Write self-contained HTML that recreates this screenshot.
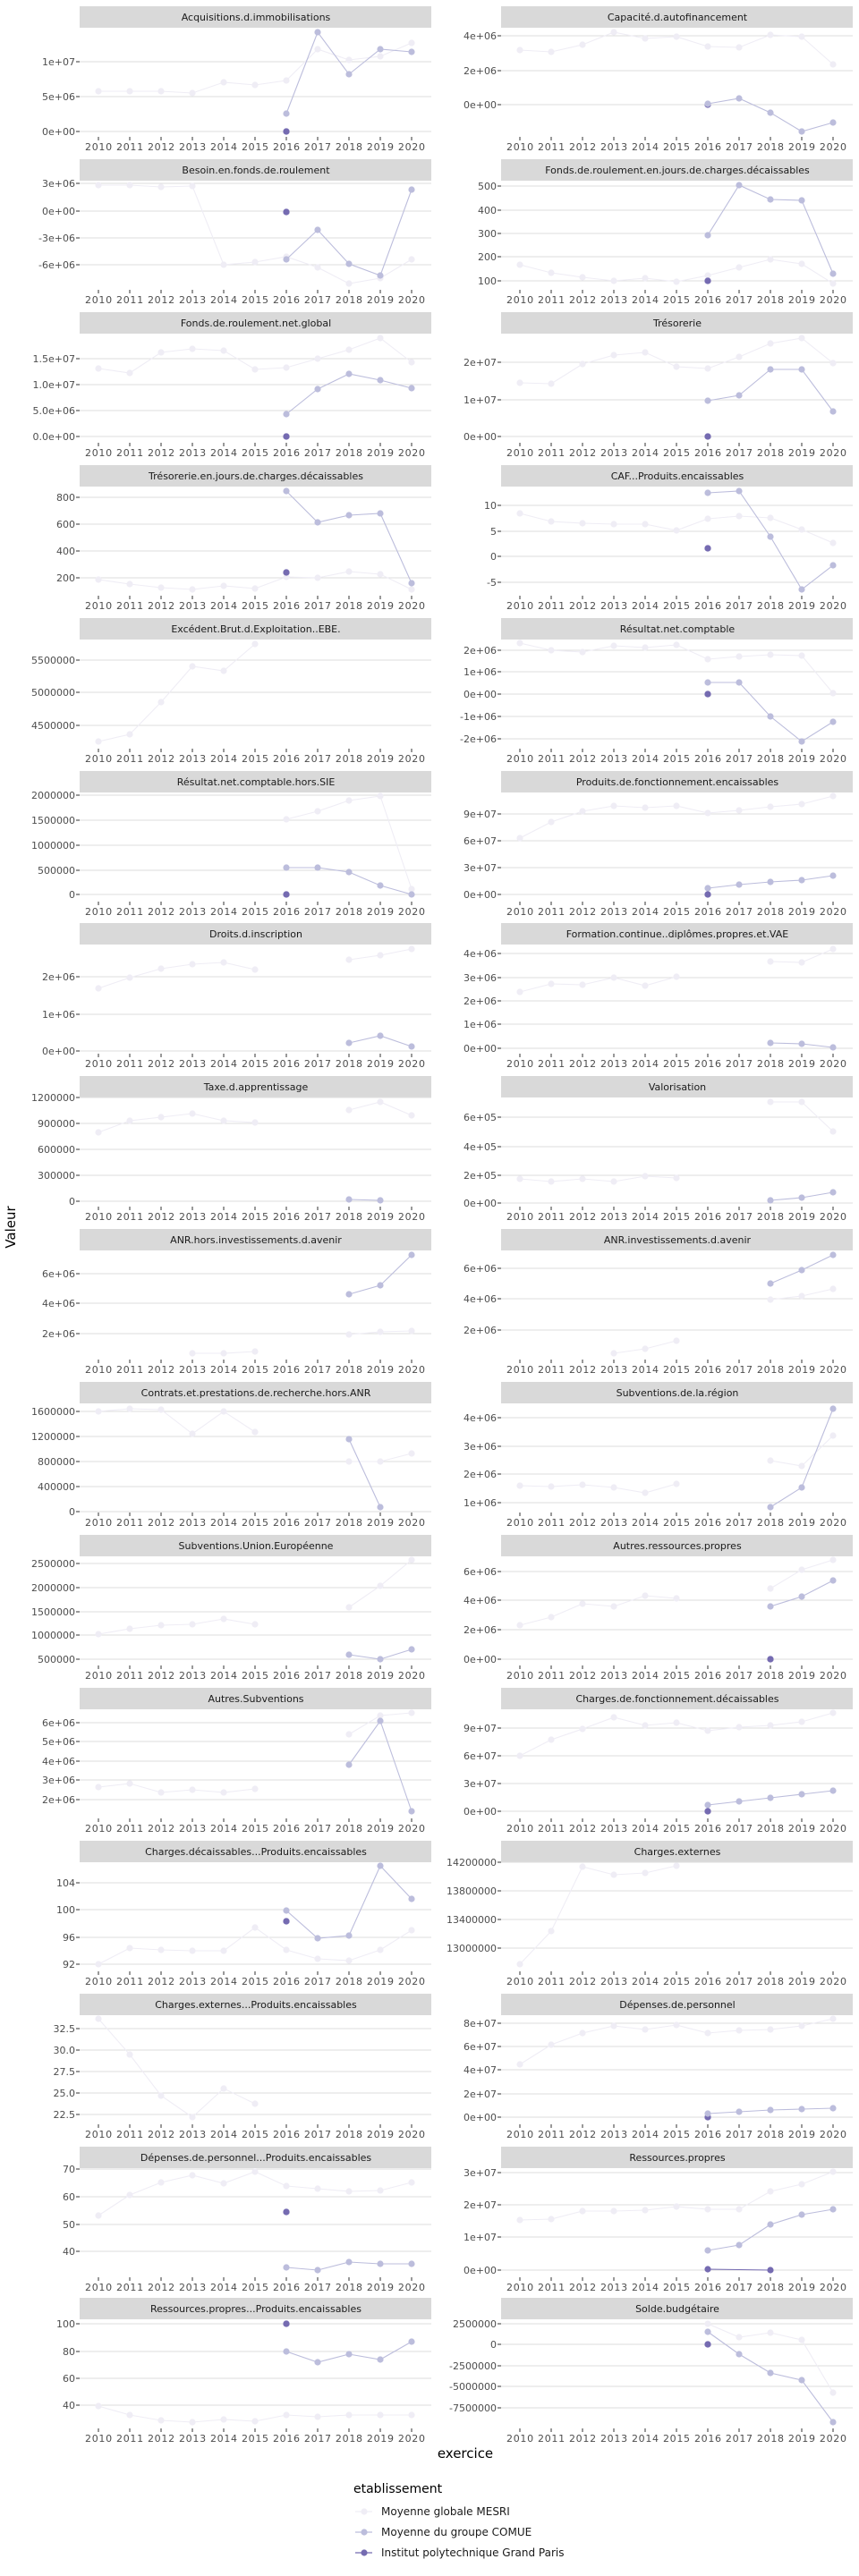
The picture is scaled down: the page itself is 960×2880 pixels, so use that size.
<!DOCTYPE html>
<html><head><meta charset="utf-8"><style>
body{margin:0;background:#fff}
svg{display:block;font-family:"DejaVu Sans","Liberation Sans",sans-serif}
.s{fill:#d9d9d9}
.t{font-size:11px;fill:#1a1a1a;text-anchor:middle}
.g{stroke:#dedede;stroke-width:1.1;fill:none}
.k{stroke:#333;stroke-width:1;fill:none}
.y{font-size:11px;fill:#4d4d4d;text-anchor:end}
.x{font-size:11px;fill:#4d4d4d}
polyline{fill:none;stroke-width:1.1}
.a{stroke:#efedf5;marker-start:url(#m1);marker-mid:url(#m1);marker-end:url(#m1)}
.b{stroke:#bcbddc;marker-start:url(#m2);marker-mid:url(#m2);marker-end:url(#m2)}
.c{stroke:#756bb1;marker-start:url(#m3);marker-mid:url(#m3);marker-end:url(#m3)}
</style></head><body>
<svg width="960" height="2880" viewBox="0 0 960 2880" xmlns="http://www.w3.org/2000/svg">
<defs>
<marker id="m1" markerUnits="userSpaceOnUse" markerWidth="8" markerHeight="8" refX="4" refY="4" overflow="visible"><circle cx="4" cy="4" r="3.6" fill="#efedf5"/></marker>
<marker id="m2" markerUnits="userSpaceOnUse" markerWidth="8" markerHeight="8" refX="4" refY="4" overflow="visible"><circle cx="4" cy="4" r="3.6" fill="#bcbddc"/></marker>
<marker id="m3" markerUnits="userSpaceOnUse" markerWidth="8" markerHeight="8" refX="4" refY="4" overflow="visible"><circle cx="4" cy="4" r="3.6" fill="#756bb1"/></marker>
</defs>
<rect width="960" height="2880" fill="#fff"/>

<!-- Row 0 -->
<g transform="translate(0,7)">
<rect x="89" width="393" height="24" class="s"/><text x="286" y="16" class="t">Acquisitions.d.immobilisations</text>
<path class="g" d="M89 62H482M89 101H482M89 140H482"/><path class="k" d="M85 62h4M85 101h4M85 140h4M110 146v4M145 146v4M180 146v4M215 146v4M250 146v4M285 146v4M320 146v4M355 146v4M390 146v4M425 146v4M460 146v4"/>
<text class="y" x="84" y="66">1e+07</text><text class="y" x="84" y="105">5e+06</text><text class="y" x="84" y="144">0e+00</text>
<text class="x" x="95" y="161" textLength="380">2010 2011 2012 2013 2014 2015 2016 2017 2018 2019 2020</text>
<polyline class="a" points="110,95 145,95 180,95 215,97 250,85 285,88 320,83 355,48 390,60 425,56 460,41"/>
<polyline class="b" points="320,120 355,29 390,76 425,48 460,51"/>
<polyline class="c" points="320,140 320,140"/>
</g>
<g transform="translate(471,7)">
<rect x="89" width="393" height="24" class="s"/><text x="286" y="16" class="t">Capacité.d.autofinancement</text>
<path class="g" d="M89 33H482M89 72H482M89 110H482"/><path class="k" d="M85 33h4M85 72h4M85 110h4M110 146v4M145 146v4M180 146v4M215 146v4M250 146v4M285 146v4M320 146v4M355 146v4M390 146v4M425 146v4M460 146v4"/>
<text class="y" x="84" y="37">4e+06</text><text class="y" x="84" y="76">2e+06</text><text class="y" x="84" y="114">0e+00</text>
<text class="x" x="95" y="161" textLength="380">2010 2011 2012 2013 2014 2015 2016 2017 2018 2019 2020</text>
<polyline class="a" points="110,49 145,51 180,43 215,29 250,36 285,34 320,45 355,46 390,32 425,34 460,65"/>
<polyline class="c" points="320,110 320,110"/>
<polyline class="b" points="320,109 355,103 390,119 425,140 460,130"/>
</g>

<!-- Row 1 -->
<g transform="translate(0,178)">
<rect x="89" width="393" height="24" class="s"/><text x="286" y="16" class="t">Besoin.en.fonds.de.roulement</text>
<path class="g" d="M89 27H482M89 58H482M89 88H482M89 118H482"/><path class="k" d="M85 27h4M85 58h4M85 88h4M85 118h4M110 146v4M145 146v4M180 146v4M215 146v4M250 146v4M285 146v4M320 146v4M355 146v4M390 146v4M425 146v4M460 146v4"/>
<text class="y" x="84" y="31">3e+06</text><text class="y" x="84" y="62">0e+00</text><text class="y" x="84" y="92">-3e+06</text><text class="y" x="84" y="122">-6e+06</text>
<text class="x" x="95" y="161" textLength="380">2010 2011 2012 2013 2014 2015 2016 2017 2018 2019 2020</text>
<polyline class="a" points="110,29 145,29 180,31 215,30 250,118 285,115 320,109 355,121 390,139 425,133 460,112"/>
<polyline class="b" points="320,112 355,79 390,117 425,130 460,34"/>
<polyline class="c" points="320,59 320,59"/>
</g>
<g transform="translate(471,178)">
<rect x="89" width="393" height="24" class="s"/><text x="286" y="16" class="t">Fonds.de.roulement.en.jours.de.charges.décaissables</text>
<path class="g" d="M89 30H482M89 57H482M89 83H482M89 109H482M89 136H482"/><path class="k" d="M85 30h4M85 57h4M85 83h4M85 109h4M85 136h4M110 146v4M145 146v4M180 146v4M215 146v4M250 146v4M285 146v4M320 146v4M355 146v4M390 146v4M425 146v4M460 146v4"/>
<text class="y" x="84" y="34">500</text><text class="y" x="84" y="61">400</text><text class="y" x="84" y="87">300</text><text class="y" x="84" y="113">200</text><text class="y" x="84" y="140">100</text>
<text class="x" x="95" y="161" textLength="380">2010 2011 2012 2013 2014 2015 2016 2017 2018 2019 2020</text>
<polyline class="a" points="110,118 145,127 180,132 215,136 250,133 285,137 320,130 355,121 390,112 425,117 460,139"/>
<polyline class="b" points="320,85 355,29 390,45 425,46 460,128"/>
<polyline class="c" points="320,136 320,136"/>
</g>

<!-- Row 2 -->
<g transform="translate(0,349)">
<rect x="89" width="393" height="24" class="s"/><text x="286" y="16" class="t">Fonds.de.roulement.net.global</text>
<path class="g" d="M89 52H482M89 81H482M89 110H482M89 139H482"/><path class="k" d="M85 52h4M85 81h4M85 110h4M85 139h4M110 146v4M145 146v4M180 146v4M215 146v4M250 146v4M285 146v4M320 146v4M355 146v4M390 146v4M425 146v4M460 146v4"/>
<text class="y" x="84" y="56">1.5e+07</text><text class="y" x="84" y="85">1.0e+07</text><text class="y" x="84" y="114">5.0e+06</text><text class="y" x="84" y="143">0.0e+00</text>
<text class="x" x="95" y="161" textLength="380">2010 2011 2012 2013 2014 2015 2016 2017 2018 2019 2020</text>
<polyline class="a" points="110,63 145,68 180,45 215,41 250,43 285,64 320,62 355,52 390,42 425,29 460,56"/>
<polyline class="b" points="320,114 355,86 390,69 425,76 460,85"/>
<polyline class="c" points="320,139 320,139"/>
</g>
<g transform="translate(471,349)">
<rect x="89" width="393" height="24" class="s"/><text x="286" y="16" class="t">Trésorerie</text>
<path class="g" d="M89 56H482M89 98H482M89 139H482"/><path class="k" d="M85 56h4M85 98h4M85 139h4M110 146v4M145 146v4M180 146v4M215 146v4M250 146v4M285 146v4M320 146v4M355 146v4M390 146v4M425 146v4M460 146v4"/>
<text class="y" x="84" y="60">2e+07</text><text class="y" x="84" y="102">1e+07</text><text class="y" x="84" y="143">0e+00</text>
<text class="x" x="95" y="161" textLength="380">2010 2011 2012 2013 2014 2015 2016 2017 2018 2019 2020</text>
<polyline class="a" points="110,79 145,80 180,58 215,48 250,45 285,61 320,63 355,50 390,35 425,29 460,57"/>
<polyline class="b" points="320,99 355,93 390,64 425,64 460,111"/>
<polyline class="c" points="320,139 320,139"/>
</g>

<!-- Row 3 -->
<g transform="translate(0,520)">
<rect x="89" width="393" height="24" class="s"/><text x="286" y="16" class="t">Trésorerie.en.jours.de.charges.décaissables</text>
<path class="g" d="M89 36H482M89 66H482M89 96H482M89 126H482"/><path class="k" d="M85 36h4M85 66h4M85 96h4M85 126h4M110 146v4M145 146v4M180 146v4M215 146v4M250 146v4M285 146v4M320 146v4M355 146v4M390 146v4M425 146v4M460 146v4"/>
<text class="y" x="84" y="40">800</text><text class="y" x="84" y="70">600</text><text class="y" x="84" y="100">400</text><text class="y" x="84" y="130">200</text>
<text class="x" x="95" y="161" textLength="380">2010 2011 2012 2013 2014 2015 2016 2017 2018 2019 2020</text>
<polyline class="a" points="110,128 145,133 180,137 215,139 250,135 285,138 320,125 355,126 390,119 425,122 460,139"/>
<polyline class="b" points="320,29 355,64 390,56 425,54 460,132"/>
<polyline class="c" points="320,120 320,120"/>
</g>
<g transform="translate(471,520)">
<rect x="89" width="393" height="24" class="s"/><text x="286" y="16" class="t">CAF...Produits.encaissables</text>
<path class="g" d="M89 45H482M89 74H482M89 102H482M89 131H482"/><path class="k" d="M85 45h4M85 74h4M85 102h4M85 131h4M110 146v4M145 146v4M180 146v4M215 146v4M250 146v4M285 146v4M320 146v4M355 146v4M390 146v4M425 146v4M460 146v4"/>
<text class="y" x="84" y="49">10</text><text class="y" x="84" y="78">5</text><text class="y" x="84" y="106">0</text><text class="y" x="84" y="135">-5</text>
<text class="x" x="95" y="161" textLength="380">2010 2011 2012 2013 2014 2015 2016 2017 2018 2019 2020</text>
<polyline class="a" points="110,54 145,63 180,65 215,66 250,66 285,73 320,60 355,57 390,59 425,72 460,87"/>
<polyline class="b" points="320,31 355,29 390,80 425,139 460,112"/>
<polyline class="c" points="320,93 320,93"/>
</g>

<!-- Row 4 -->
<g transform="translate(0,691)">
<rect x="89" width="393" height="24" class="s"/><text x="286" y="16" class="t">Excédent.Brut.d.Exploitation..EBE.</text>
<path class="g" d="M89 47H482M89 83H482M89 120H482"/><path class="k" d="M85 47h4M85 83h4M85 120h4M110 146v4M145 146v4M180 146v4M215 146v4M250 146v4M285 146v4M320 146v4M355 146v4M390 146v4M425 146v4M460 146v4"/>
<text class="y" x="84" y="51">5500000</text><text class="y" x="84" y="87">5000000</text><text class="y" x="84" y="124">4500000</text>
<text class="x" x="95" y="161" textLength="380">2010 2011 2012 2013 2014 2015 2016 2017 2018 2019 2020</text>
<polyline class="a" points="110,138 145,130 180,94 215,54 250,59 285,29"/>
</g>
<g transform="translate(471,691)">
<rect x="89" width="393" height="24" class="s"/><text x="286" y="16" class="t">Résultat.net.comptable</text>
<path class="g" d="M89 36H482M89 60H482M89 85H482M89 110H482M89 135H482"/><path class="k" d="M85 36h4M85 60h4M85 85h4M85 110h4M85 135h4M110 146v4M145 146v4M180 146v4M215 146v4M250 146v4M285 146v4M320 146v4M355 146v4M390 146v4M425 146v4M460 146v4"/>
<text class="y" x="84" y="40">2e+06</text><text class="y" x="84" y="64">1e+06</text><text class="y" x="84" y="89">0e+00</text><text class="y" x="84" y="114">-1e+06</text><text class="y" x="84" y="139">-2e+06</text>
<text class="x" x="95" y="161" textLength="380">2010 2011 2012 2013 2014 2015 2016 2017 2018 2019 2020</text>
<polyline class="a" points="110,28 145,36 180,38 215,31 250,33 285,30 320,46 355,43 390,41 425,42 460,84"/>
<polyline class="b" points="320,72 355,72 390,110 425,138 460,116"/>
<polyline class="c" points="320,85 320,85"/>
</g>

<!-- Row 5 -->
<g transform="translate(0,862)">
<rect x="89" width="393" height="24" class="s"/><text x="286" y="16" class="t">Résultat.net.comptable.hors.SIE</text>
<path class="g" d="M89 27H482M89 55H482M89 83H482M89 111H482M89 138H482"/><path class="k" d="M85 27h4M85 55h4M85 83h4M85 111h4M85 138h4M110 146v4M145 146v4M180 146v4M215 146v4M250 146v4M285 146v4M320 146v4M355 146v4M390 146v4M425 146v4M460 146v4"/>
<text class="y" x="84" y="31">2000000</text><text class="y" x="84" y="59">1500000</text><text class="y" x="84" y="87">1000000</text><text class="y" x="84" y="115">500000</text><text class="y" x="84" y="142">0</text>
<text class="x" x="95" y="161" textLength="380">2010 2011 2012 2013 2014 2015 2016 2017 2018 2019 2020</text>
<polyline class="a" points="320,54 355,45 390,33 425,28 460,132"/>
<polyline class="b" points="320,108 355,108 390,113 425,128 460,138"/>
<polyline class="c" points="320,138 320,138"/>
</g>
<g transform="translate(471,862)">
<rect x="89" width="393" height="24" class="s"/><text x="286" y="16" class="t">Produits.de.fonctionnement.encaissables</text>
<path class="g" d="M89 48H482M89 78H482M89 108H482M89 138H482"/><path class="k" d="M85 48h4M85 78h4M85 108h4M85 138h4M110 146v4M145 146v4M180 146v4M215 146v4M250 146v4M285 146v4M320 146v4M355 146v4M390 146v4M425 146v4M460 146v4"/>
<text class="y" x="84" y="52">9e+07</text><text class="y" x="84" y="82">6e+07</text><text class="y" x="84" y="112">3e+07</text><text class="y" x="84" y="142">0e+00</text>
<text class="x" x="95" y="161" textLength="380">2010 2011 2012 2013 2014 2015 2016 2017 2018 2019 2020</text>
<polyline class="a" points="110,75 145,57 180,45 215,39 250,41 285,39 320,47 355,44 390,40 425,37 460,28"/>
<polyline class="b" points="320,131 355,127 390,124 425,122 460,117"/>
<polyline class="c" points="320,138 320,138"/>
</g>

<!-- Row 6 -->
<g transform="translate(0,1032)">
<rect x="89" width="393" height="24" class="s"/><text x="286" y="16" class="t">Droits.d.inscription</text>
<path class="g" d="M89 60H482M89 102H482M89 143H482"/><path class="k" d="M85 60h4M85 102h4M85 143h4M110 146v4M145 146v4M180 146v4M215 146v4M250 146v4M285 146v4M320 146v4M355 146v4M390 146v4M425 146v4M460 146v4"/>
<text class="y" x="84" y="64">2e+06</text><text class="y" x="84" y="106">1e+06</text><text class="y" x="84" y="147">0e+00</text>
<text class="x" x="95" y="161" textLength="380">2010 2011 2012 2013 2014 2015 2016 2017 2018 2019 2020</text>
<polyline class="a" points="110,73 145,61 180,51 215,46 250,44 285,52"/>
<polyline class="a" points="390,41 425,36 460,29"/>
<polyline class="b" points="390,134 425,126 460,138"/>
</g>
<g transform="translate(471,1032)">
<rect x="89" width="393" height="24" class="s"/><text x="286" y="16" class="t">Formation.continue..diplômes.propres.et.VAE</text>
<path class="g" d="M89 34H482M89 61H482M89 87H482M89 113H482M89 140H482"/><path class="k" d="M85 34h4M85 61h4M85 87h4M85 113h4M85 140h4M110 146v4M145 146v4M180 146v4M215 146v4M250 146v4M285 146v4M320 146v4M355 146v4M390 146v4M425 146v4M460 146v4"/>
<text class="y" x="84" y="38">4e+06</text><text class="y" x="84" y="65">3e+06</text><text class="y" x="84" y="91">2e+06</text><text class="y" x="84" y="117">1e+06</text><text class="y" x="84" y="144">0e+00</text>
<text class="x" x="95" y="161" textLength="380">2010 2011 2012 2013 2014 2015 2016 2017 2018 2019 2020</text>
<polyline class="a" points="110,77 145,68 180,69 215,61 250,70 285,60"/>
<polyline class="a" points="390,43 425,44 460,29"/>
<polyline class="b" points="390,134 425,135 460,139"/>
</g>

<!-- Row 7 -->
<g transform="translate(0,1203)">
<rect x="89" width="393" height="24" class="s"/><text x="286" y="16" class="t">Taxe.d.apprentissage</text>
<path class="g" d="M89 24H482M89 53H482M89 82H482M89 111H482M89 140H482"/><path class="k" d="M85 24h4M85 53h4M85 82h4M85 111h4M85 140h4M110 146v4M145 146v4M180 146v4M215 146v4M250 146v4M285 146v4M320 146v4M355 146v4M390 146v4M425 146v4M460 146v4"/>
<text class="y" x="84" y="28">1200000</text><text class="y" x="84" y="57">900000</text><text class="y" x="84" y="86">600000</text><text class="y" x="84" y="115">300000</text><text class="y" x="84" y="144">0</text>
<text class="x" x="95" y="161" textLength="380">2010 2011 2012 2013 2014 2015 2016 2017 2018 2019 2020</text>
<polyline class="a" points="110,63 145,50 180,46 215,42 250,50 285,52"/>
<polyline class="a" points="390,38 425,29 460,44"/>
<polyline class="b" points="390,138 425,139"/>
</g>
<g transform="translate(471,1203)">
<rect x="89" width="393" height="24" class="s"/><text x="286" y="16" class="t">Valorisation</text>
<path class="g" d="M89 46H482M89 79H482M89 111H482M89 142H482"/><path class="k" d="M85 46h4M85 79h4M85 111h4M85 142h4M110 146v4M145 146v4M180 146v4M215 146v4M250 146v4M285 146v4M320 146v4M355 146v4M390 146v4M425 146v4M460 146v4"/>
<text class="y" x="84" y="50">6e+05</text><text class="y" x="84" y="83">4e+05</text><text class="y" x="84" y="115">2e+05</text><text class="y" x="84" y="146">0e+00</text>
<text class="x" x="95" y="161" textLength="380">2010 2011 2012 2013 2014 2015 2016 2017 2018 2019 2020</text>
<polyline class="a" points="110,115 145,118 180,115 215,118 250,112 285,114"/>
<polyline class="a" points="390,29 425,29 460,62"/>
<polyline class="b" points="390,139 425,136 460,130"/>
</g>

<!-- Row 8 -->
<g transform="translate(0,1374)">
<rect x="89" width="393" height="24" class="s"/><text x="286" y="16" class="t">ANR.hors.investissements.d.avenir</text>
<path class="g" d="M89 50H482M89 83H482M89 117H482"/><path class="k" d="M85 50h4M85 83h4M85 117h4M110 146v4M145 146v4M180 146v4M215 146v4M250 146v4M285 146v4M320 146v4M355 146v4M390 146v4M425 146v4M460 146v4"/>
<text class="y" x="84" y="54">6e+06</text><text class="y" x="84" y="87">4e+06</text><text class="y" x="84" y="121">2e+06</text>
<text class="x" x="95" y="161" textLength="380">2010 2011 2012 2013 2014 2015 2016 2017 2018 2019 2020</text>
<polyline class="a" points="215,139 250,139 285,137"/>
<polyline class="a" points="390,118 425,115 460,114"/>
<polyline class="b" points="390,73 425,63 460,29"/>
</g>
<g transform="translate(471,1374)">
<rect x="89" width="393" height="24" class="s"/><text x="286" y="16" class="t">ANR.investissements.d.avenir</text>
<path class="g" d="M89 44H482M89 78H482M89 113H482"/><path class="k" d="M85 44h4M85 78h4M85 113h4M110 146v4M145 146v4M180 146v4M215 146v4M250 146v4M285 146v4M320 146v4M355 146v4M390 146v4M425 146v4M460 146v4"/>
<text class="y" x="84" y="48">6e+06</text><text class="y" x="84" y="82">4e+06</text><text class="y" x="84" y="117">2e+06</text>
<text class="x" x="95" y="161" textLength="380">2010 2011 2012 2013 2014 2015 2016 2017 2018 2019 2020</text>
<polyline class="a" points="215,139 250,134 285,125"/>
<polyline class="a" points="390,79 425,75 460,67"/>
<polyline class="b" points="390,61 425,46 460,29"/>
</g>

<!-- Row 9 -->
<g transform="translate(0,1545)">
<rect x="89" width="393" height="24" class="s"/><text x="286" y="16" class="t">Contrats.et.prestations.de.recherche.hors.ANR</text>
<path class="g" d="M89 33H482M89 61H482M89 89H482M89 117H482M89 145H482"/><path class="k" d="M85 33h4M85 61h4M85 89h4M85 117h4M85 145h4M110 146v4M145 146v4M180 146v4M215 146v4M250 146v4M285 146v4M320 146v4M355 146v4M390 146v4M425 146v4M460 146v4"/>
<text class="y" x="84" y="37">1600000</text><text class="y" x="84" y="65">1200000</text><text class="y" x="84" y="93">800000</text><text class="y" x="84" y="121">400000</text><text class="y" x="84" y="149">0</text>
<text class="x" x="95" y="161" textLength="380">2010 2011 2012 2013 2014 2015 2016 2017 2018 2019 2020</text>
<polyline class="a" points="110,33 145,30 180,31 215,58 250,33 285,56"/>
<polyline class="a" points="390,89 425,89 460,80"/>
<polyline class="b" points="390,64 425,140"/>
</g>
<g transform="translate(471,1545)">
<rect x="89" width="393" height="24" class="s"/><text x="286" y="16" class="t">Subventions.de.la.région</text>
<path class="g" d="M89 40H482M89 72H482M89 103H482M89 135H482"/><path class="k" d="M85 40h4M85 72h4M85 103h4M85 135h4M110 146v4M145 146v4M180 146v4M215 146v4M250 146v4M285 146v4M320 146v4M355 146v4M390 146v4M425 146v4M460 146v4"/>
<text class="y" x="84" y="44">4e+06</text><text class="y" x="84" y="76">3e+06</text><text class="y" x="84" y="107">2e+06</text><text class="y" x="84" y="139">1e+06</text>
<text class="x" x="95" y="161" textLength="380">2010 2011 2012 2013 2014 2015 2016 2017 2018 2019 2020</text>
<polyline class="a" points="110,116 145,117 180,115 215,118 250,124 285,114"/>
<polyline class="a" points="390,88 425,94 460,60"/>
<polyline class="b" points="390,140 425,118 460,30"/>
</g>

<!-- Row 10 -->
<g transform="translate(0,1716)">
<rect x="89" width="393" height="24" class="s"/><text x="286" y="16" class="t">Subventions.Union.Européenne</text>
<path class="g" d="M89 32H482M89 59H482M89 86H482M89 112H482M89 139H482"/><path class="k" d="M85 32h4M85 59h4M85 86h4M85 112h4M85 139h4M110 146v4M145 146v4M180 146v4M215 146v4M250 146v4M285 146v4M320 146v4M355 146v4M390 146v4M425 146v4M460 146v4"/>
<text class="y" x="84" y="36">2500000</text><text class="y" x="84" y="63">2000000</text><text class="y" x="84" y="90">1500000</text><text class="y" x="84" y="116">1000000</text><text class="y" x="84" y="143">500000</text>
<text class="x" x="95" y="161" textLength="380">2010 2011 2012 2013 2014 2015 2016 2017 2018 2019 2020</text>
<polyline class="a" points="110,111 145,105 180,101 215,100 250,94 285,100"/>
<polyline class="a" points="390,81 425,57 460,28"/>
<polyline class="b" points="390,134 425,139 460,128"/>
</g>
<g transform="translate(471,1716)">
<rect x="89" width="393" height="24" class="s"/><text x="286" y="16" class="t">Autres.ressources.propres</text>
<path class="g" d="M89 41H482M89 73H482M89 106H482M89 139H482"/><path class="k" d="M85 41h4M85 73h4M85 106h4M85 139h4M110 146v4M145 146v4M180 146v4M215 146v4M250 146v4M285 146v4M320 146v4M355 146v4M390 146v4M425 146v4M460 146v4"/>
<text class="y" x="84" y="45">6e+06</text><text class="y" x="84" y="77">4e+06</text><text class="y" x="84" y="110">2e+06</text><text class="y" x="84" y="143">0e+00</text>
<text class="x" x="95" y="161" textLength="380">2010 2011 2012 2013 2014 2015 2016 2017 2018 2019 2020</text>
<polyline class="a" points="110,101 145,92 180,77 215,80 250,68 285,71"/>
<polyline class="a" points="390,60 425,39 460,28"/>
<polyline class="b" points="390,80 425,69 460,51"/>
<polyline class="c" points="390,139 390,139"/>
</g>

<!-- Row 11 -->
<g transform="translate(0,1887)">
<rect x="89" width="393" height="24" class="s"/><text x="286" y="16" class="t">Autres.Subventions</text>
<path class="g" d="M89 39H482M89 60H482M89 82H482M89 103H482M89 125H482"/><path class="k" d="M85 39h4M85 60h4M85 82h4M85 103h4M85 125h4M110 146v4M145 146v4M180 146v4M215 146v4M250 146v4M285 146v4M320 146v4M355 146v4M390 146v4M425 146v4M460 146v4"/>
<text class="y" x="84" y="43">6e+06</text><text class="y" x="84" y="64">5e+06</text><text class="y" x="84" y="86">4e+06</text><text class="y" x="84" y="107">3e+06</text><text class="y" x="84" y="129">2e+06</text>
<text class="x" x="95" y="161" textLength="380">2010 2011 2012 2013 2014 2015 2016 2017 2018 2019 2020</text>
<polyline class="a" points="110,111 145,107 180,117 215,114 250,117 285,113"/>
<polyline class="a" points="390,52 425,31 460,28"/>
<polyline class="b" points="390,86 425,37 460,138"/>
</g>
<g transform="translate(471,1887)">
<rect x="89" width="393" height="24" class="s"/><text x="286" y="16" class="t">Charges.de.fonctionnement.décaissables</text>
<path class="g" d="M89 45H482M89 76H482M89 107H482M89 138H482"/><path class="k" d="M85 45h4M85 76h4M85 107h4M85 138h4M110 146v4M145 146v4M180 146v4M215 146v4M250 146v4M285 146v4M320 146v4M355 146v4M390 146v4M425 146v4M460 146v4"/>
<text class="y" x="84" y="49">9e+07</text><text class="y" x="84" y="80">6e+07</text><text class="y" x="84" y="111">3e+07</text><text class="y" x="84" y="142">0e+00</text>
<text class="x" x="95" y="161" textLength="380">2010 2011 2012 2013 2014 2015 2016 2017 2018 2019 2020</text>
<polyline class="a" points="110,76 145,58 180,46 215,33 250,42 285,39 320,48 355,44 390,42 425,38 460,28"/>
<polyline class="b" points="320,131 355,127 390,123 425,119 460,115"/>
<polyline class="c" points="320,138 320,138"/>
</g>

<!-- Row 12 -->
<g transform="translate(0,2058)">
<rect x="89" width="393" height="24" class="s"/><text x="286" y="16" class="t">Charges.décaissables...Produits.encaissables</text>
<path class="g" d="M89 47H482M89 77H482M89 108H482M89 138H482"/><path class="k" d="M85 47h4M85 77h4M85 108h4M85 138h4M110 146v4M145 146v4M180 146v4M215 146v4M250 146v4M285 146v4M320 146v4M355 146v4M390 146v4M425 146v4M460 146v4"/>
<text class="y" x="84" y="51">104</text><text class="y" x="84" y="81">100</text><text class="y" x="84" y="112">96</text><text class="y" x="84" y="142">92</text>
<text class="x" x="95" y="161" textLength="380">2010 2011 2012 2013 2014 2015 2016 2017 2018 2019 2020</text>
<polyline class="a" points="110,138 145,120 180,122 215,123 250,123 285,97 320,122 355,132 390,134 425,122 460,100"/>
<polyline class="b" points="320,78 355,109 390,106 425,28 460,65"/>
<polyline class="c" points="320,90 320,90"/>
</g>
<g transform="translate(471,2058)">
<rect x="89" width="393" height="24" class="s"/><text x="286" y="16" class="t">Charges.externes</text>
<path class="g" d="M89 24H482M89 56H482M89 88H482M89 120H482"/><path class="k" d="M85 24h4M85 56h4M85 88h4M85 120h4M110 146v4M145 146v4M180 146v4M215 146v4M250 146v4M285 146v4M320 146v4M355 146v4M390 146v4M425 146v4M460 146v4"/>
<text class="y" x="84" y="28">14200000</text><text class="y" x="84" y="60">13800000</text><text class="y" x="84" y="92">13400000</text><text class="y" x="84" y="124">13000000</text>
<text class="x" x="95" y="161" textLength="380">2010 2011 2012 2013 2014 2015 2016 2017 2018 2019 2020</text>
<polyline class="a" points="110,138 145,101 180,29 215,38 250,36 285,28"/>
</g>

<!-- Row 13 -->
<g transform="translate(0,2229)">
<rect x="89" width="393" height="24" class="s"/><text x="286" y="16" class="t">Charges.externes...Produits.encaissables</text>
<path class="g" d="M89 39H482M89 63H482M89 87H482M89 111H482M89 135H482"/><path class="k" d="M85 39h4M85 63h4M85 87h4M85 111h4M85 135h4M110 146v4M145 146v4M180 146v4M215 146v4M250 146v4M285 146v4M320 146v4M355 146v4M390 146v4M425 146v4M460 146v4"/>
<text class="y" x="84" y="43">32.5</text><text class="y" x="84" y="67">30.0</text><text class="y" x="84" y="91">27.5</text><text class="y" x="84" y="115">25.0</text><text class="y" x="84" y="139">22.5</text>
<text class="x" x="95" y="161" textLength="380">2010 2011 2012 2013 2014 2015 2016 2017 2018 2019 2020</text>
<polyline class="a" points="110,28 145,68 180,114 215,138 250,106 285,123"/>
</g>
<g transform="translate(471,2229)">
<rect x="89" width="393" height="24" class="s"/><text x="286" y="16" class="t">Dépenses.de.personnel</text>
<path class="g" d="M89 33H482M89 59H482M89 85H482M89 112H482M89 138H482"/><path class="k" d="M85 33h4M85 59h4M85 85h4M85 112h4M85 138h4M110 146v4M145 146v4M180 146v4M215 146v4M250 146v4M285 146v4M320 146v4M355 146v4M390 146v4M425 146v4M460 146v4"/>
<text class="y" x="84" y="37">8e+07</text><text class="y" x="84" y="63">6e+07</text><text class="y" x="84" y="89">4e+07</text><text class="y" x="84" y="116">2e+07</text><text class="y" x="84" y="142">0e+00</text>
<text class="x" x="95" y="161" textLength="380">2010 2011 2012 2013 2014 2015 2016 2017 2018 2019 2020</text>
<polyline class="a" points="110,79 145,57 180,44 215,36 250,40 285,35 320,44 355,41 390,40 425,36 460,28"/>
<polyline class="c" points="320,138 320,138"/>
<polyline class="b" points="320,134 355,132 390,130 425,129 460,128"/>
</g>

<!-- Row 14 -->
<g transform="translate(0,2400)">
<rect x="89" width="393" height="24" class="s"/><text x="286" y="16" class="t">Dépenses.de.personnel...Produits.encaissables</text>
<path class="g" d="M89 25H482M89 56H482M89 87H482M89 117H482"/><path class="k" d="M85 25h4M85 56h4M85 87h4M85 117h4M110 146v4M145 146v4M180 146v4M215 146v4M250 146v4M285 146v4M320 146v4M355 146v4M390 146v4M425 146v4M460 146v4"/>
<text class="y" x="84" y="29">70</text><text class="y" x="84" y="60">60</text><text class="y" x="84" y="91">50</text><text class="y" x="84" y="121">40</text>
<text class="x" x="95" y="161" textLength="380">2010 2011 2012 2013 2014 2015 2016 2017 2018 2019 2020</text>
<polyline class="a" points="110,77 145,54 180,40 215,32 250,41 285,28 320,44 355,47 390,50 425,49 460,40"/>
<polyline class="b" points="320,135 355,138 390,129 425,131 460,131"/>
<polyline class="c" points="320,73 320,73"/>
</g>
<g transform="translate(471,2400)">
<rect x="89" width="393" height="24" class="s"/><text x="286" y="16" class="t">Ressources.propres</text>
<path class="g" d="M89 29H482M89 65H482M89 101H482M89 138H482"/><path class="k" d="M85 29h4M85 65h4M85 101h4M85 138h4M110 146v4M145 146v4M180 146v4M215 146v4M250 146v4M285 146v4M320 146v4M355 146v4M390 146v4M425 146v4M460 146v4"/>
<text class="y" x="84" y="33">3e+07</text><text class="y" x="84" y="69">2e+07</text><text class="y" x="84" y="105">1e+07</text><text class="y" x="84" y="142">0e+00</text>
<text class="x" x="95" y="161" textLength="380">2010 2011 2012 2013 2014 2015 2016 2017 2018 2019 2020</text>
<polyline class="a" points="110,82 145,81 180,72 215,72 250,71 285,67 320,70 355,70 390,50 425,42 460,28"/>
<polyline class="b" points="320,116 355,110 390,87 425,76 460,70"/>
<polyline class="c" points="320,137 390,138"/>
</g>

<!-- Row 15 -->
<g transform="translate(0,2569)">
<rect x="89" width="393" height="24" class="s"/><text x="286" y="16" class="t">Ressources.propres...Produits.encaissables</text>
<path class="g" d="M89 29H482M89 60H482M89 90H482M89 120H482"/><path class="k" d="M85 29h4M85 60h4M85 90h4M85 120h4M110 146v4M145 146v4M180 146v4M215 146v4M250 146v4M285 146v4M320 146v4M355 146v4M390 146v4M425 146v4M460 146v4"/>
<text class="y" x="84" y="33">100</text><text class="y" x="84" y="64">80</text><text class="y" x="84" y="94">60</text><text class="y" x="84" y="124">40</text>
<text class="x" x="95" y="161" textLength="380">2010 2011 2012 2013 2014 2015 2016 2017 2018 2019 2020</text>
<polyline class="a" points="110,121 145,131 180,137 215,139 250,136 285,138 320,131 355,133 390,131 425,131 460,131"/>
<polyline class="b" points="320,60 355,72 390,63 425,69 460,49"/>
<polyline class="c" points="320,29 320,29"/>
</g>
<g transform="translate(471,2569)">
<rect x="89" width="393" height="24" class="s"/><text x="286" y="16" class="t">Solde.budgétaire</text>
<path class="g" d="M89 29H482M89 52H482M89 76H482M89 99H482M89 123H482"/><path class="k" d="M85 29h4M85 52h4M85 76h4M85 99h4M85 123h4M110 146v4M145 146v4M180 146v4M215 146v4M250 146v4M285 146v4M320 146v4M355 146v4M390 146v4M425 146v4M460 146v4"/>
<text class="y" x="84" y="33">2500000</text><text class="y" x="84" y="56">0</text><text class="y" x="84" y="80">-2500000</text><text class="y" x="84" y="103">-5000000</text><text class="y" x="84" y="127">-7500000</text>
<text class="x" x="95" y="161" textLength="380">2010 2011 2012 2013 2014 2015 2016 2017 2018 2019 2020</text>
<polyline class="a" points="320,29 355,44 390,39 425,47 460,106"/>
<polyline class="b" points="320,38 355,63 390,84 425,92 460,139"/>
<polyline class="c" points="320,52 320,52"/>
</g>

<!-- Axis titles -->
<text x="520" y="2748" font-size="15" fill="#000" text-anchor="middle">exercice</text>
<text transform="translate(17,1372) rotate(-90)" font-size="15" fill="#000" text-anchor="middle">Valeur</text>

<!-- Legend -->
<text x="395" y="2787" font-size="14" fill="#000">etablissement</text>
<line x1="397" y1="2808" x2="416" y2="2808" stroke="#efedf5" stroke-width="1.3"/><circle cx="407" cy="2808" r="3.6" fill="#efedf5"/>
<text x="426" y="2812" font-size="12" fill="#1a1a1a">Moyenne globale MESRI</text>
<line x1="397" y1="2831" x2="416" y2="2831" stroke="#bcbddc" stroke-width="1.3"/><circle cx="407" cy="2831" r="3.6" fill="#bcbddc"/>
<text x="426" y="2835" font-size="12" fill="#1a1a1a">Moyenne du groupe COMUE</text>
<line x1="397" y1="2854" x2="416" y2="2854" stroke="#756bb1" stroke-width="1.3"/><circle cx="407" cy="2854" r="3.6" fill="#756bb1"/>
<text x="426" y="2858" font-size="12" fill="#1a1a1a">Institut polytechnique Grand Paris</text>
</svg>
</body></html>
